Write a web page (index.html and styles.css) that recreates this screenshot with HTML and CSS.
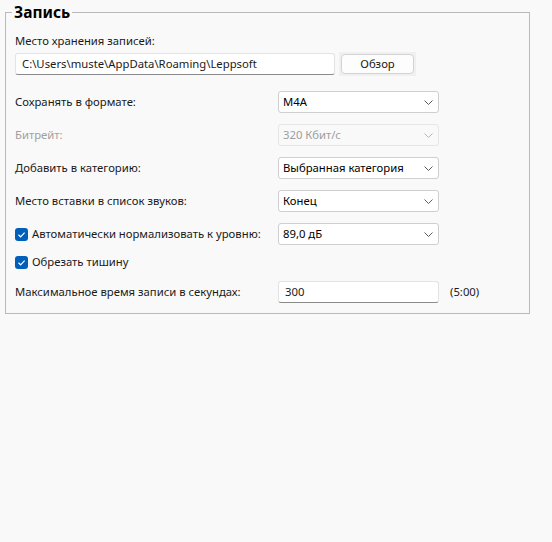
FILE: index.html
```html
<!DOCTYPE html>
<html lang="ru">
<head>
<meta charset="utf-8">
<title>Запись</title>
<link rel="stylesheet" href="styles.css">
</head>
<body>
<fieldset class="group">
  <legend class="group-title">Запись</legend>

  <div class="label-line">Место хранения записей:</div>
  <div class="path-row">
    <div class="textbox path">C:\Users\muste\AppData\Roaming\Leppsoft</div>
    <div class="button-well"><button class="button" type="button">Обзор</button></div>
  </div>

  <div class="row first">
    <span class="label">Сохранять в формате:</span>
    <div class="combo"><span class="combo-value">M4A</span><svg class="chevron" viewBox="0 0 9 5" width="9" height="5"><path d="M0.5 0.5 L4.5 4.5 L8.5 0.5"/></svg></div>
  </div>

  <div class="row">
    <span class="label disabled">Битрейт:</span>
    <div class="combo disabled"><span class="combo-value">320 Кбит/с</span><svg class="chevron" viewBox="0 0 9 5" width="9" height="5"><path d="M0.5 0.5 L4.5 4.5 L8.5 0.5"/></svg></div>
  </div>

  <div class="row">
    <span class="label">Добавить в категорию:</span>
    <div class="combo"><span class="combo-value">Выбранная категория</span><svg class="chevron" viewBox="0 0 9 5" width="9" height="5"><path d="M0.5 0.5 L4.5 4.5 L8.5 0.5"/></svg></div>
  </div>

  <div class="row">
    <span class="label">Место вставки в список звуков:</span>
    <div class="combo"><span class="combo-value">Конец</span><svg class="chevron" viewBox="0 0 9 5" width="9" height="5"><path d="M0.5 0.5 L4.5 4.5 L8.5 0.5"/></svg></div>
  </div>

  <div class="row">
    <label class="check"><span class="box"><svg viewBox="0 0 13 13" width="13" height="13"><path d="M3.5 6.8 L5.6 8.8 L9.6 4.6"/></svg></span>Автоматически нормализовать к уровню:</label>
    <div class="combo"><span class="combo-value">89,0 дБ</span><svg class="chevron" viewBox="0 0 9 5" width="9" height="5"><path d="M0.5 0.5 L4.5 4.5 L8.5 0.5"/></svg></div>
  </div>

  <div class="row check-row">
    <label class="check"><span class="box"><svg viewBox="0 0 13 13" width="13" height="13"><path d="M3.5 6.8 L5.6 8.8 L9.6 4.6"/></svg></span>Обрезать тишину</label>
  </div>

  <div class="row last">
    <span class="label">Максимальное время записи в секундах:</span>
    <div class="textbox">300</div>
    <span class="note">(5:00)</span>
  </div>
</fieldset>
</body>
</html>
```

FILE: styles.css
```css
html, body {
  margin: 0;
  padding: 0;
  background: #f9f9f9;
}

body {
  font-family: "Noto Sans", "Liberation Sans", sans-serif;
  font-size: 11.3px;
  line-height: 16px;
  color: #1a1a1a;
}

.group {
  box-sizing: border-box;
  width: 525px;
  margin: 3px 0 0 5px;
  padding: 12px 9px 10px 9px;
  border: 1px solid #bababa;
  min-width: 0;
}

.group-title {
  margin-left: -3px;
  padding: 0 2px;
  font-size: 15.5px;
  line-height: 18px;
  font-weight: 700;
  color: #000;
}

.label-line {
  height: 16px;
}

.path-row {
  display: flex;
  align-items: center;
  margin-top: 3px;
  height: 24px;
}

.textbox {
  box-sizing: border-box;
  height: 22px;
  padding: 0 6px;
  display: flex;
  align-items: center;
  background: #fff;
  border: 1px solid #e3e3e3;
  border-bottom-color: #8a8a8a;
  border-radius: 3px;
  color: #1a1a1a;
  white-space: nowrap;
  overflow: hidden;
}

.textbox.path {
  width: 320px;
}

.button-well {
  margin-left: 4px;
  padding: 2px;
  background: #f0f0f0;
  display: flex;
}

.button {
  box-sizing: border-box;
  width: 73px;
  height: 20px;
  padding: 0;
  font: inherit;
  color: #1a1a1a;
  background: #fdfdfd;
  border: 1px solid #d3d3d3;
  border-radius: 4px;
}

.row {
  display: grid;
  grid-template-columns: 263px 161px auto;
  align-items: center;
  height: 22px;
  margin-top: 11px;
}

.row.first {
  margin-top: 15px;
}

.row.check-row {
  margin-top: 6px;
}

.row.last {
  margin-top: 8px;
}

.label.disabled {
  color: #a0a0a0;
}

.combo {
  box-sizing: border-box;
  height: 22px;
  display: flex;
  align-items: center;
  justify-content: space-between;
  padding: 0 5px 0 4px;
  background: #fff;
  border: 1px solid #cfcfcf;
  border-radius: 3px;
  color: #000;
}

.combo.disabled {
  background: #f9f9f9;
  border-color: #e6e6e6;
  color: #9d9d9d;
}

.chevron path {
  fill: none;
  stroke: #5c5c5c;
  stroke-width: 1;
}

.combo.disabled .chevron path {
  stroke: #b5b5b5;
}

.check {
  display: flex;
  align-items: center;
  white-space: nowrap;
}

.box {
  width: 13px;
  height: 13px;
  margin-right: 4px;
  border-radius: 3px;
  background: #005fb8;
  display: flex;
}

.box path {
  fill: none;
  stroke: #fff;
  stroke-width: 1.2;
}

.note {
  padding-left: 11px;
  color: #1a1a1a;
}
```
